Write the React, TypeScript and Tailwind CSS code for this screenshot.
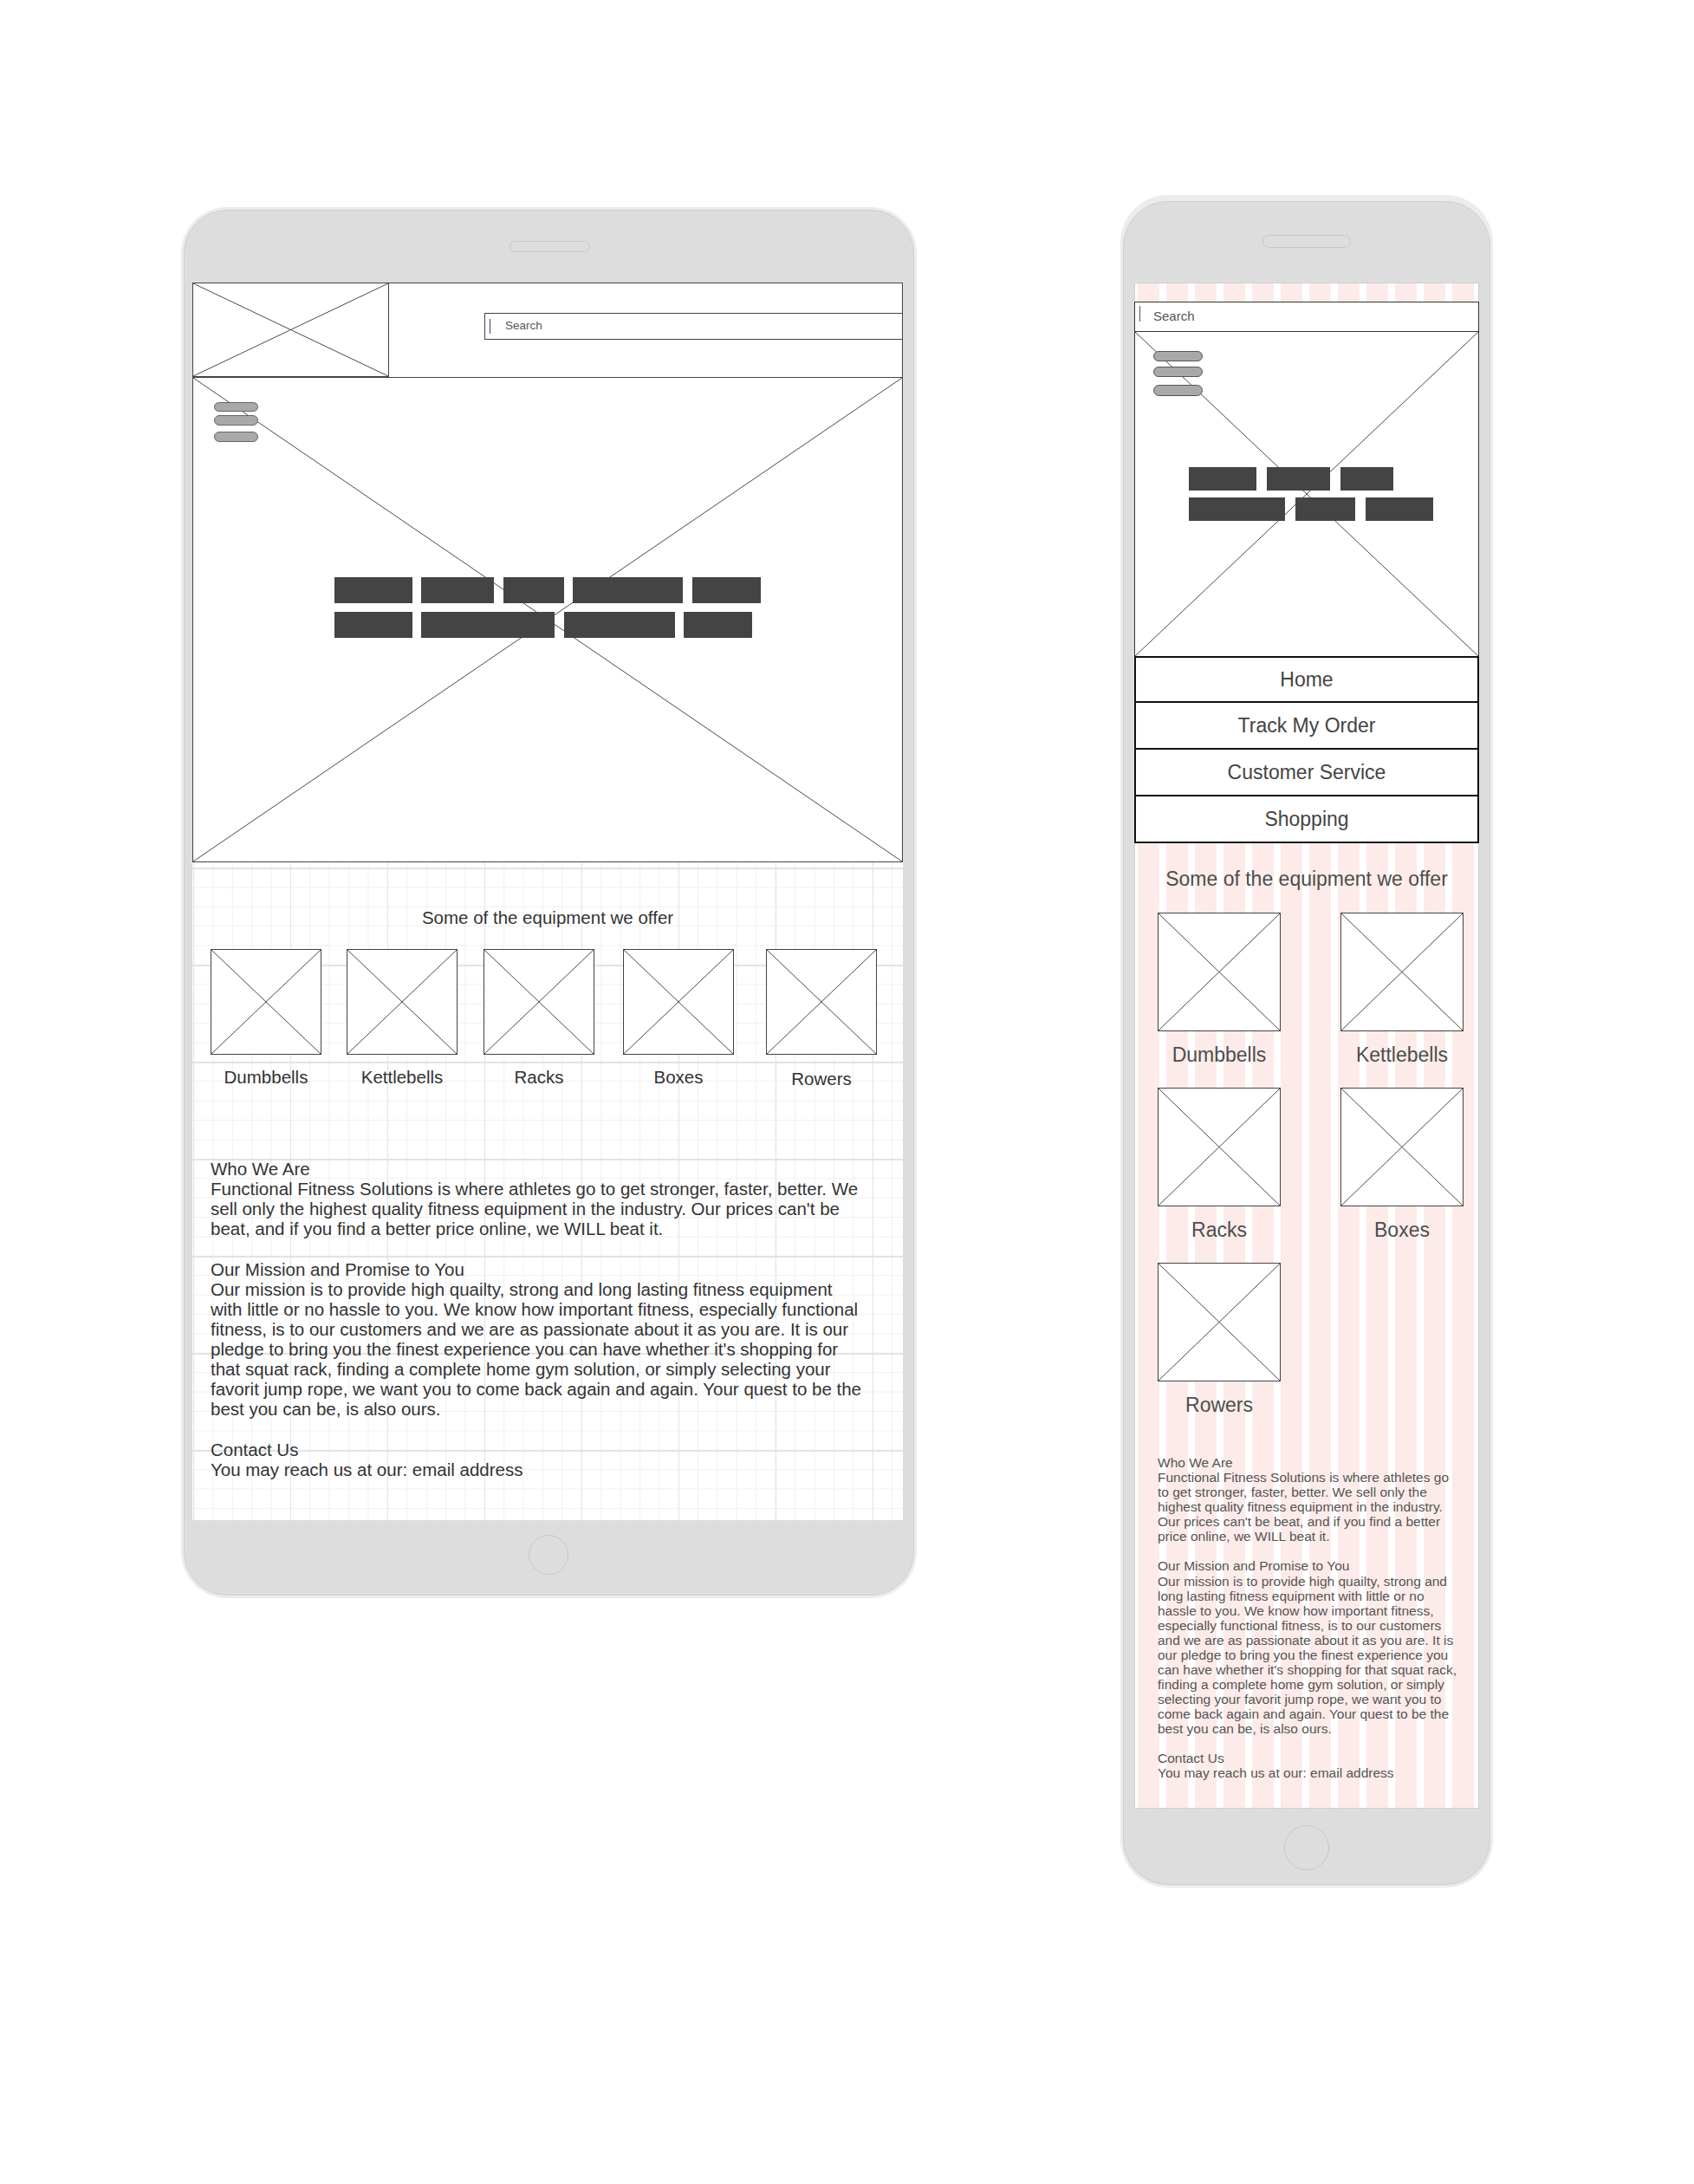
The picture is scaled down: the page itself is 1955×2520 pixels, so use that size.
import React from 'react'

function Cross() {
    return (
        <svg className="absolute inset-0 h-full w-full" viewBox="0 0 100 100" preserveAspectRatio="none">
            <line x1="0" y1="0" x2="100" y2="100" stroke="#4a4a4a" strokeWidth="1" vectorEffect="non-scaling-stroke" />
            <line x1="100" y1="0" x2="0" y2="100" stroke="#4a4a4a" strokeWidth="1" vectorEffect="non-scaling-stroke" />
        </svg>
    )
}

const tabletText = [
    'Who We Are',
    'Functional Fitness Solutions is where athletes go to get stronger, faster, better. We',
    "sell only the highest quality fitness equipment in the industry. Our prices can't be",
    'beat, and if you find a better price online, we WILL beat it.',
    '',
    'Our Mission and Promise to You',
    'Our mission is to provide high quailty, strong and long lasting fitness equipment',
    'with little or no hassle to you. We know how important fitness, especially functional',
    'fitness, is to our customers and we are as passionate about it as you are. It is our',
    "pledge to bring you the finest experience you can have whether it's shopping for",
    'that squat rack, finding a complete home gym solution, or simply selecting your',
    'favorit jump rope, we want you to come back again and again. Your quest to be the',
    'best you can be, is also ours.',
    '',
    'Contact Us',
    'You may reach us at our: email address',
]

const phoneText = [
    'Who We Are',
    'Functional Fitness Solutions is where athletes go',
    'to get stronger, faster, better. We sell only the',
    'highest quality fitness equipment in the industry.',
    "Our prices can't be beat, and if you find a better",
    'price online, we WILL beat it.',
    '',
    'Our Mission and Promise to You',
    'Our mission is to provide high quailty, strong and',
    'long lasting fitness equipment with little or no',
    'hassle to you. We know how important fitness,',
    'especially functional fitness, is to our customers',
    'and we are as passionate about it as you are. It is',
    'our pledge to bring you the finest experience you',
    "can have whether it's shopping for that squat rack,",
    'finding a complete home gym solution, or simply',
    'selecting your favorit jump rope, we want you to',
    'come back again and again. Your quest to be the',
    'best you can be, is also ours.',
    '',
    'Contact Us',
    'You may reach us at our: email address',
]

const tabletItems = [
    { name: 'Dumbbells', ml: 'ml-0', extra: '' },
    { name: 'Kettlebells', ml: 'ml-[29px]', extra: '' },
    { name: 'Racks', ml: 'ml-[30px]', extra: '' },
    { name: 'Boxes', ml: 'ml-[33px]', extra: '' },
    { name: 'Rowers', ml: 'ml-[37px]', extra: 'pt-[2px]' },
]

const phoneItems = ['Dumbbells', 'Kettlebells', 'Racks', 'Boxes', 'Rowers']

function Tablet() {
    return (
        <div className="mt-[10px] flex h-[1599px] w-[843px] shrink-0 flex-col rounded-[50px] border border-[#cfcfcf] bg-[#dddddd] pt-[35px] pl-[9px] pr-[12px] shadow-[0_0_0_3px_#ececec]">
            <div className="ml-[366px] h-[13px] w-[93px] rounded-full border border-[#c8c8c8]" />
            <div className="mt-[35px] flex h-[1428px] w-[820px] flex-col bg-white">
                {/* header */}
                <div className="flex h-[110px] shrink-0 border border-[#444]">
                    <div className="relative h-full w-[226px] border-r border-b border-[#444]">
                        <Cross />
                    </div>
                    <div className="flex-1 pt-[34px] pl-[110px]">
                        <div className="flex h-[31px] items-center border-y border-l border-[#444]">
                            <span className="ml-[5px] h-[17px] w-px bg-[#34457a]" />
                            <span className="ml-[17px] text-[13.5px] text-[#555]">Search</span>
                        </div>
                    </div>
                </div>
                {/* hero */}
                <div className="relative flex h-[559px] shrink-0 items-center justify-center border-x border-b border-[#444] pb-[29px]">
                    <Cross />
                    <div className="absolute top-[28px] left-[24px] flex flex-col">
                        <span className="h-[11px] w-[51px] rounded-full border border-[#666] bg-[#a9a9a9]" />
                        <span className="mt-[4px] h-[12px] w-[51px] rounded-full border border-[#666] bg-[#a9a9a9]" />
                        <span className="mt-[7px] h-[12px] w-[51px] rounded-full border border-[#666] bg-[#a9a9a9]" />
                    </div>
                    <div className="relative flex w-[493px] flex-col gap-[10px]">
                        <div className="flex gap-[10.5px]">
                            <span className="h-[30px] w-[90px] bg-[#444]" />
                            <span className="h-[30px] w-[84px] bg-[#444]" />
                            <span className="h-[30px] w-[70px] bg-[#444]" />
                            <span className="h-[30px] w-[127px] bg-[#444]" />
                            <span className="h-[30px] w-[79px] bg-[#444]" />
                        </div>
                        <div className="flex gap-[10.5px]">
                            <span className="h-[30px] w-[90px] bg-[#444]" />
                            <span className="h-[30px] w-[154px] bg-[#444]" />
                            <span className="h-[30px] w-[128px] bg-[#444]" />
                            <span className="h-[30px] w-[79px] bg-[#444]" />
                        </div>
                    </div>
                </div>
                {/* grid content */}
                <div className="flex h-[759px] shrink-0 flex-col bg-white bg-[image:linear-gradient(to_right,#e3e3e3_1px,transparent_1px),linear-gradient(to_bottom,#e3e3e3_2px,transparent_2px),linear-gradient(to_right,#f0f0f0_1px,transparent_1px),linear-gradient(to_bottom,#f0f0f0_1px,transparent_1px)] bg-size-[112px_112px,112px_112px,22.4px_22.4px,22.4px_22.4px] bg-position-[1px_6px] pt-[52px] text-[20.5px] leading-[23.1px] text-[#333]">
                    <div className="text-center">Some of the equipment we offer</div>
                    <div className="mt-[25px] flex pl-[21px]">
                        {tabletItems.map((it) => (
                            <div key={it.name} className={`flex w-[128px] flex-col items-center ${it.ml}`}>
                                <div className="relative h-[122px] w-[128px] border border-[#444] bg-white">
                                    <Cross />
                                </div>
                                <div className={`mt-[14px] whitespace-nowrap ${it.extra}`}>{it.name}</div>
                            </div>
                        ))}
                    </div>
                    <div className="mt-[81px] pl-[21px]">
                        {tabletText.map((l, i) => (
                            <div key={i} className="h-[23.1px] whitespace-pre">{l}</div>
                        ))}
                    </div>
                </div>
            </div>
            <div className="mt-[17px] ml-[388px] h-[46px] w-[46px] rounded-full border border-[#c8c8c8]" />
        </div>
    )
}

function Phone() {
    const navs = ['Home', 'Track My Order', 'Customer Service', 'Shopping']
    return (
        <div className="ml-[241px] flex h-[1943px] w-[424px] shrink-0 flex-col rounded-[52px] border border-[#cfcfcf] bg-[#dddddd] px-[12px] pt-[38px] shadow-[0_0_0_3px_#ececec,0_-4px_0_3px_#ececec]">
            <div className="mx-auto h-[15px] w-[102px] rounded-full border border-[#c8c8c8]" />
            <div className="mt-[40px] flex h-[1761px] w-[398px] flex-col bg-white bg-[image:linear-gradient(to_right,#fdebe9_25px,transparent_25px)] bg-size-[33px_100%] bg-position-[4px_0] shadow-[inset_0_0_0_1px_#cfcfcf]">
                <div className="h-[22px] shrink-0" />
                {/* search */}
                <div className="flex h-[35px] shrink-0 items-center border border-[#333] bg-white">
                    <span className="mt-[4px] ml-[5px] h-[18px] w-px self-start bg-[#555]" />
                    <span className="ml-[15px] text-[15px] text-[#555]">Search</span>
                </div>
                {/* hero */}
                <div className="relative flex h-[374px] shrink-0 items-center justify-center border-x border-[#333] bg-white">
                    <Cross />
                    <div className="absolute top-[22px] left-[21px] flex flex-col">
                        <span className="h-[12px] w-[57px] rounded-full border border-[#555] bg-[#a9a9a9]" />
                        <span className="mt-[6px] h-[12px] w-[57px] rounded-full border border-[#555] bg-[#a9a9a9]" />
                        <span className="mt-[9px] h-[13px] w-[57px] rounded-full border border-[#555] bg-[#a9a9a9]" />
                    </div>
                    <div className="relative ml-[10px] flex w-[282px] flex-col gap-[8px]">
                        <div className="flex gap-[12px]">
                            <span className="h-[27px] w-[78px] bg-[#444]" />
                            <span className="h-[27px] w-[73px] bg-[#444]" />
                            <span className="h-[27px] w-[61px] bg-[#444]" />
                        </div>
                        <div className="flex gap-[12px]">
                            <span className="h-[27px] w-[111px] bg-[#444]" />
                            <span className="h-[27px] w-[69px] bg-[#444]" />
                            <span className="h-[27px] w-[78px] bg-[#444]" />
                        </div>
                    </div>
                </div>
                {/* nav */}
                <div className="flex shrink-0 flex-col">
                    {navs.map((n, i) => (
                        <div
                            key={n}
                            className={`flex h-[54px] items-center justify-center border-2 border-[#111] bg-white text-[23px] text-[#444] ${i > 0 ? 'border-t-0' : ''}`}
                        >
                            {n}
                        </div>
                    ))}
                </div>
                {/* equipment */}
                <div className="mt-[28px] text-center text-[23px] leading-[26px] text-[#4d4d4d]">Some of the equipment we offer</div>
                <div className="mt-[26px] grid grid-cols-[142px_142px] gap-x-[69px] gap-y-[25px] pl-[27px] text-[23px] leading-[26px] text-[#4d4d4d]">
                    {phoneItems.map((n) => (
                        <div key={n} className="flex flex-col items-center">
                            <div className="relative h-[137px] w-[142px] border border-[#444] bg-white">
                                <Cross />
                            </div>
                            <div className="mt-[14px] whitespace-nowrap">{n}</div>
                        </div>
                    ))}
                </div>
                <div className="mt-[45px] pl-[27px] text-[15.5px] leading-[17.07px] text-[#555]">
                    {phoneText.map((l, i) => (
                        <div key={i} className="h-[17.07px] whitespace-pre">{l}</div>
                    ))}
                </div>
            </div>
            <div className="mx-auto mt-[19px] h-[52px] w-[52px] rounded-full border border-[#c8c8c8]" />
        </div>
    )
}

export default function App() {
    return (
        <div className="flex min-h-[2520px] w-[1955px] items-start bg-white pt-[232px] pl-[212px] font-['Liberation_Sans',Arial,sans-serif]">
            <Tablet />
            <Phone />
        </div>
    )
}
